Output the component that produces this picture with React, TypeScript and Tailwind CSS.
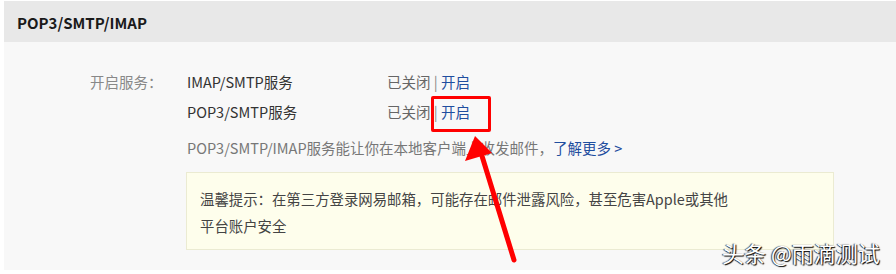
import React from 'react';

const cjk = { fontFamily: '"Noto Sans CJK SC", "Noto Sans", sans-serif' };

function ServiceRow({ name }: { name: string }) {
  return (
    <div className="flex h-[30px] items-center">
      <div className="w-[200px] text-[#333]">{name}</div>
      <div className="text-[#666]">
        已关闭 <span className="text-[#888]">|</span> <span className="text-[#1f4e9f]">开启</span>
      </div>
    </div>
  );
}

export default function App() {
  return (
    <div className="relative h-[274px] w-[896px] overflow-hidden bg-white pl-[4px] pt-[1px]" style={cjk}>
      <div className="h-[269px] bg-[#f8f8f8]">
        {/* Header */}
        <div className="flex h-[41px] items-center bg-[#e8e8e8] pl-[13px] pt-[3px]">
          <h1 className="text-[15px] font-bold text-[#1a1a1a]">POP3/SMTP/IMAP</h1>
        </div>

        {/* Body */}
        <div className="flex pl-[86px] pt-[25px] text-[14.5px]">
          <div className="flex h-[30px] w-[97px] items-center text-[#888]">开启服务：</div>
          <div className="flex flex-col">
            <ServiceRow name="IMAP/SMTP服务" />
            <ServiceRow name="POP3/SMTP服务" />
            <div className="mt-[6px] flex h-[30px] items-center text-[#777]">
              POP3/SMTP/IMAP服务能让你在本地客户端上收发邮件，
              <span className="text-[#1f4e9f]">了解更多 &gt;</span>
            </div>
            <div className="-ml-px mt-[9px] h-[78px] w-[648px] border border-[#ebebd2] bg-[#fefeec] px-[13px] pt-[12px] text-[14.4px] leading-[27px] text-[#444]">
              <p>温馨提示：在第三方登录网易邮箱，可能存在邮件泄露风险，甚至危害Apple或其他</p>
              <p>平台账户安全</p>
            </div>
          </div>
        </div>
      </div>

      {/* Red highlight box */}
      <div className="absolute left-[431px] top-[96px] h-[36px] w-[60px] rounded-[2px] border-[3px] border-[#ff0000]" />

      {/* Red arrow */}
      <svg className="absolute left-0 top-0" width="896" height="274" viewBox="0 0 896 274">
        <line x1="482" y1="156" x2="514" y2="260" stroke="#ff0000" strokeWidth="5" strokeLinecap="round" />
        <polygon points="475,136 465,161 492,153" fill="#ff0000" />
      </svg>

      {/* Watermark */}
      <div
        className="absolute left-[722px] top-[237px] text-[22px] leading-[30px] text-white"
        style={{ textShadow: '1px 1px 1px #000, -1px 0 1px #333' }}
      >
        头条 @雨滴测试
      </div>
    </div>
  );
}
